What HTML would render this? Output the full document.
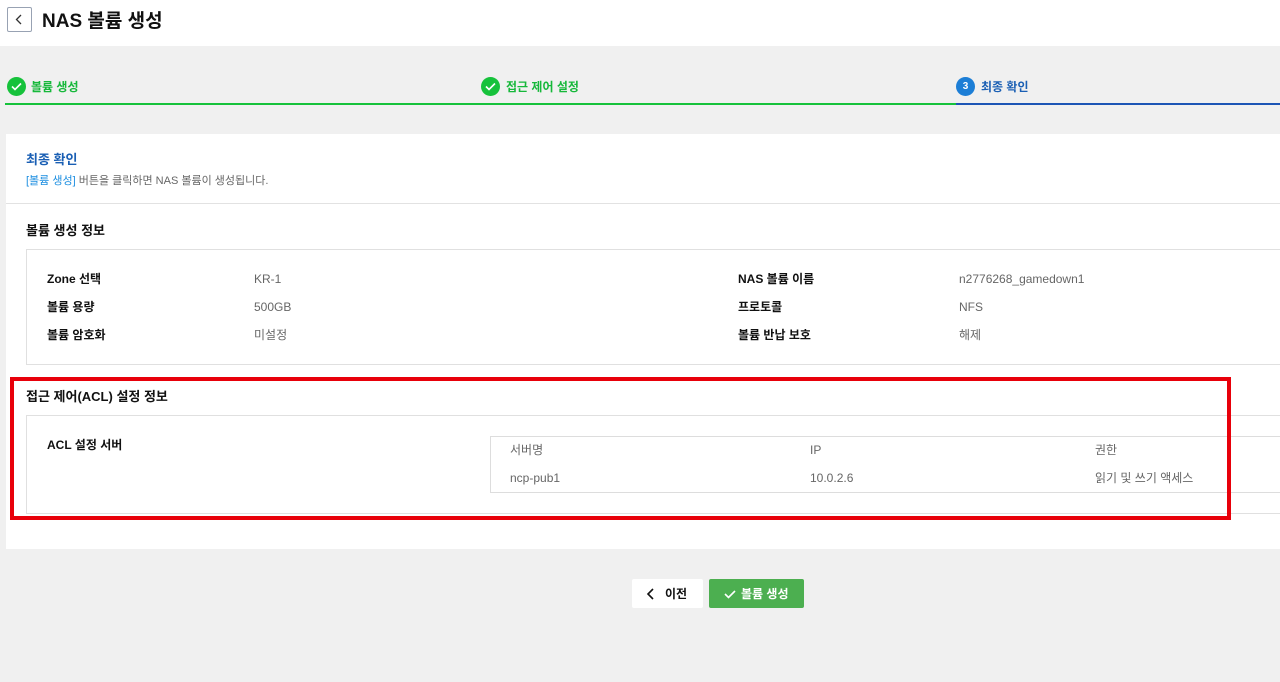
<!DOCTYPE html>
<html><head><meta charset="utf-8"><style>
*{margin:0;padding:0;box-sizing:border-box}
body{width:1280px;height:682px;background:#f0f0f0;font-family:"Liberation Sans","Noto Sans CJK KR",sans-serif;position:relative;overflow:hidden;font-size:12px;color:#333}
.a{position:absolute}
.hdr{left:0;top:0;width:1280px;height:46px;background:#fff}
.back{left:7px;top:7px;width:25px;height:25px;border:1px solid #98a2b3;border-radius:2px;background:#fff}
.t{white-space:nowrap}
.b{font-weight:bold}
.chk{width:19px;height:19px;border-radius:50%;background:#16c23b}
.lbl{font-size:12px;font-weight:bold;color:#111}
.val{font-size:12px;color:#666}
</style></head><body>
<div class="a hdr"></div>
<div class="a back"><svg width="23" height="23" viewBox="0 0 23 23"><path d="M13 7l-4.5 4.5L13 16" fill="none" stroke="#333" stroke-width="1.3"/></svg></div>
<div class="a t b" style="left:42px;top:6px;font-size:19px;color:#111">NAS 볼륨 생성</div>

<div class="a chk" style="left:7px;top:77px"><svg width="19" height="19"><path d="M5 9.5l3 3 6-6" fill="none" stroke="#fff" stroke-width="1.6"/></svg></div>
<div class="a t b" style="left:31px;top:78px;color:#16b83a;font-size:12px">볼륨 생성</div>
<div class="a chk" style="left:481px;top:77px"><svg width="19" height="19"><path d="M5 9.5l3 3 6-6" fill="none" stroke="#fff" stroke-width="1.6"/></svg></div>
<div class="a t b" style="left:506px;top:78px;color:#16b83a;font-size:12px">접근 제어 설정</div>
<div class="a" style="left:956px;top:77px;width:19px;height:19px;border-radius:50%;background:#1c7ed6;color:#fff;font-size:10px;font-weight:bold;text-align:center;line-height:19px">3</div>
<div class="a t b" style="left:981px;top:78px;color:#1a5fb4;font-size:12px">최종 확인</div>
<div class="a" style="left:5px;top:103px;width:951px;height:2px;background:#16c23b"></div>
<div class="a" style="left:956px;top:103px;width:324px;height:2px;background:#1c55b5"></div>

<div class="a" style="left:6px;top:134px;width:1274px;height:415px;background:#fff"></div>
<div class="a t b" style="left:26px;top:149px;font-size:13px;color:#1a5fb4">최종 확인</div>
<div class="a t" style="left:26px;top:172px;font-size:11px;color:#666"><span style="color:#1c8ee0">[볼륨 생성]</span> 버튼을 클릭하면 NAS 볼륨이 생성됩니다.</div>
<div class="a" style="left:6px;top:203px;width:1274px;height:1px;background:#e2e2e2"></div>

<div class="a t b" style="left:26px;top:220px;font-size:13px;color:#111">볼륨 생성 정보</div>
<div class="a" style="left:26px;top:249px;width:1260px;height:116px;border:1px solid #e0e0e0"></div>
<div class="a t lbl" style="left:47px;top:270px">Zone 선택</div><div class="a t val" style="left:254px;top:272px">KR-1</div>
<div class="a t lbl" style="left:47px;top:298px">볼륨 용량</div><div class="a t val" style="left:254px;top:300px">500GB</div>
<div class="a t lbl" style="left:47px;top:326px">볼륨 암호화</div><div class="a t val" style="left:254px;top:326px">미설정</div>
<div class="a t lbl" style="left:738px;top:270px">NAS 볼륨 이름</div><div class="a t val" style="left:959px;top:272px">n2776268_gamedown1</div>
<div class="a t lbl" style="left:738px;top:298px">프로토콜</div><div class="a t val" style="left:959px;top:300px">NFS</div>
<div class="a t lbl" style="left:738px;top:326px">볼륨 반납 보호</div><div class="a t val" style="left:959px;top:326px">해제</div>

<div class="a t b" style="left:26px;top:386px;font-size:13px;color:#111">접근 제어(ACL) 설정 정보</div>
<div class="a" style="left:26px;top:415px;width:1260px;height:99px;border:1px solid #e0e0e0"></div>
<div class="a t lbl" style="left:47px;top:436px">ACL 설정 서버</div>
<div class="a" style="left:490px;top:436px;width:800px;height:57px;border:1px solid #ddd"></div>
<div class="a t val" style="left:510px;top:441px">서버명</div>
<div class="a t val" style="left:810px;top:443px">IP</div>
<div class="a t val" style="left:1095px;top:441px">권한</div>
<div class="a t val" style="left:510px;top:471px">ncp-pub1</div>
<div class="a t val" style="left:810px;top:471px">10.0.2.6</div>
<div class="a t val" style="left:1095px;top:469px">읽기 및 쓰기 액세스</div>
<div class="a" style="left:10px;top:377px;width:1221px;height:143px;border:4px solid #e8000a"></div>

<div class="a" style="left:632px;top:579px;width:71px;height:29px;background:#fff;border-radius:2px"></div>
<svg class="a" style="left:645px;top:587px" width="12" height="14"><path d="M8 2L3 7l5 5" fill="none" stroke="#111" stroke-width="1.6"/></svg>
<div class="a t b" style="left:665px;top:585px;font-size:12px;color:#111">이전</div>
<div class="a" style="left:709px;top:579px;width:95px;height:29px;background:#4caf50;border-radius:2px"></div>
<svg class="a" style="left:723px;top:587px" width="14" height="14"><path d="M2 7l3.5 3.5L12 4" fill="none" stroke="#fff" stroke-width="1.6"/></svg>
<div class="a t b" style="left:741px;top:585px;font-size:12px;color:#fff">볼륨 생성</div>
</body></html>
